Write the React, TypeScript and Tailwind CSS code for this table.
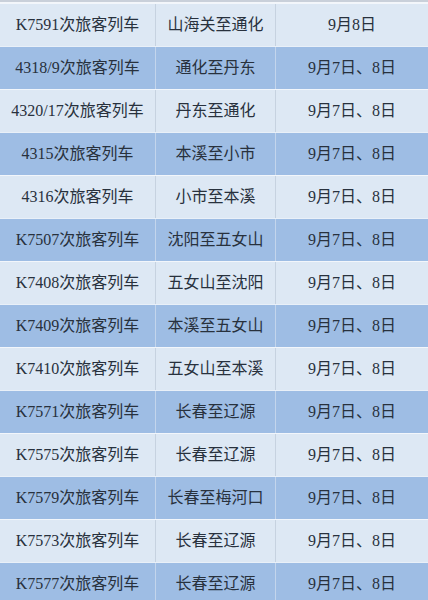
import React from "react"

const rows = [
  { train: "K7591次旅客列车", route: "山海关至通化", date: "9月8日" },
  { train: "4318/9次旅客列车", route: "通化至丹东", date: "9月7日、8日" },
  { train: "4320/17次旅客列车", route: "丹东至通化", date: "9月7日、8日" },
  { train: "4315次旅客列车", route: "本溪至小市", date: "9月7日、8日" },
  { train: "4316次旅客列车", route: "小市至本溪", date: "9月7日、8日" },
  { train: "K7507次旅客列车", route: "沈阳至五女山", date: "9月7日、8日" },
  { train: "K7408次旅客列车", route: "五女山至沈阳", date: "9月7日、8日" },
  { train: "K7409次旅客列车", route: "本溪至五女山", date: "9月7日、8日" },
  { train: "K7410次旅客列车", route: "五女山至本溪", date: "9月7日、8日" },
  { train: "K7571次旅客列车", route: "长春至辽源", date: "9月7日、8日" },
  { train: "K7575次旅客列车", route: "长春至辽源", date: "9月7日、8日" },
  { train: "K7579次旅客列车", route: "长春至梅河口", date: "9月7日、8日" },
  { train: "K7573次旅客列车", route: "长春至辽源", date: "9月7日、8日" },
  { train: "K7577次旅客列车", route: "长春至辽源", date: "9月7日、8日" },
]

export default function App() {
  return (
    <div className="w-[428px] h-[600px] overflow-hidden bg-white text-[16px] text-[#28313d] font-['Liberation_Serif','Noto_Sans_CJK_SC',serif]">
      {/* top strip from the previous row */}
      <div className="h-[3px] bg-[#c9d0da] border-b border-[#f3f6fa]" />

      {rows.map((row, i) => {
        const dark = i % 2 === 1
        return (
          <div
            key={i}
            className={
              dark
                ? "grid grid-cols-[155px_120px_1fr] h-[43px] border-t border-[#e9f0f8] bg-[#9ebde4]"
                : "grid grid-cols-[155px_120px_1fr] h-[43px] border-t border-[#f2f6fb] bg-[#dde8f4]"
            }
          >
            <div className="flex items-center justify-center whitespace-nowrap">{row.train}</div>
            <div
              className={
                dark
                  ? "flex items-center justify-center whitespace-nowrap border-l border-[#c3d5ec]"
                  : "flex items-center justify-center whitespace-nowrap border-l border-[#c6d2e0]"
              }
            >
              {row.route}
            </div>
            <div
              className={
                dark
                  ? "flex items-center justify-center whitespace-nowrap border-l border-[#c3d5ec]"
                  : "flex items-center justify-center whitespace-nowrap border-l border-[#c6d2e0]"
              }
            >
              {row.date}
            </div>
          </div>
        )
      })}
    </div>
  )
}
